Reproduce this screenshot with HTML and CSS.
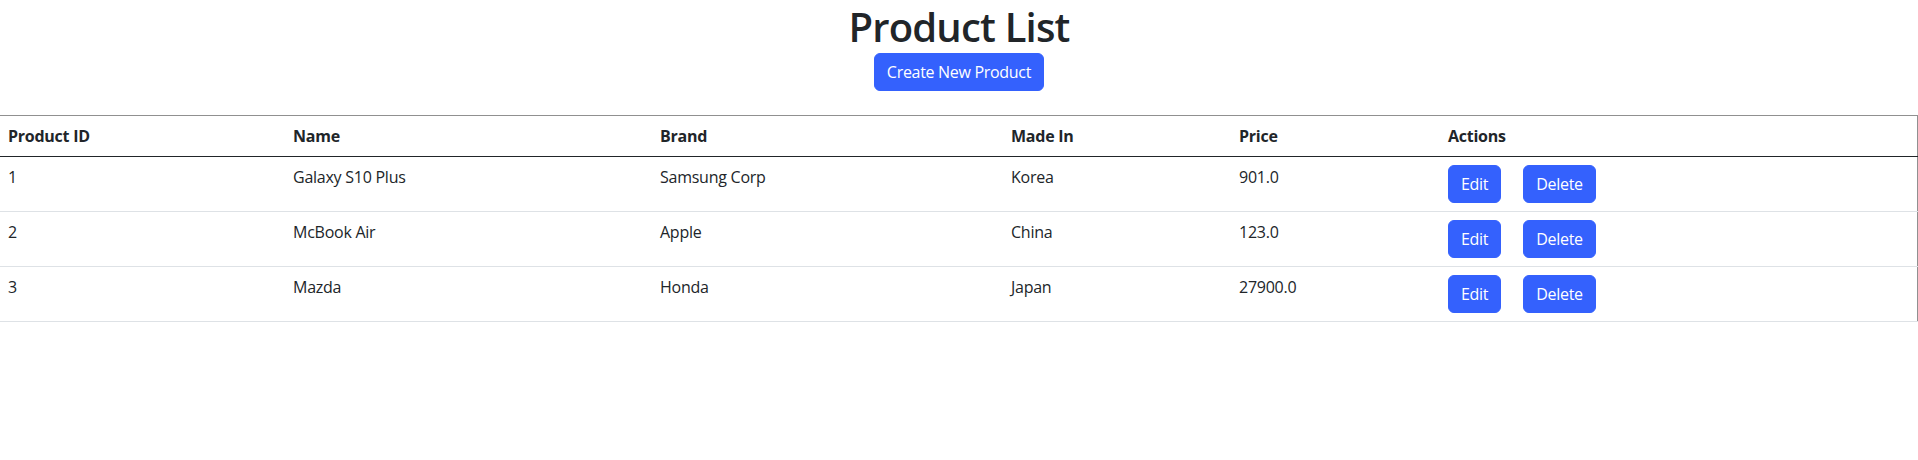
FILE: index.html
```html
<!DOCTYPE html>
<html lang="en">
<head>
<meta charset="utf-8">
<title>Product List</title>
<link rel="stylesheet" href="styles.css">
</head>
<body>
<div class="page-head">
  <h1 class="title">Product List</h1>
  <button class="btn">Create New Product</button>
</div>
<table class="products">
  <thead>
    <tr>
      <th class="c-id">Product ID</th>
      <th class="c-name">Name</th>
      <th class="c-brand">Brand</th>
      <th class="c-made">Made In</th>
      <th class="c-price">Price</th>
      <th class="c-actions">Actions</th>
    </tr>
  </thead>
  <tbody>
    <tr>
      <td>1</td><td>Galaxy S10 Plus</td><td>Samsung Corp</td><td>Korea</td><td>901.0</td>
      <td><div class="actions"><button class="btn">Edit</button><button class="btn">Delete</button></div></td>
    </tr>
    <tr>
      <td>2</td><td>McBook Air</td><td>Apple</td><td>China</td><td>123.0</td>
      <td><div class="actions"><button class="btn">Edit</button><button class="btn">Delete</button></div></td>
    </tr>
    <tr>
      <td>3</td><td>Mazda</td><td>Honda</td><td>Japan</td><td>27900.0</td>
      <td><div class="actions"><button class="btn">Edit</button><button class="btn">Delete</button></div></td>
    </tr>
  </tbody>
</table>
</body>
</html>
```
FILE: styles.css
```css
html, body {
  margin: 0;
  padding: 0;
  background: #fff;
}
body {
  font-family: "Open Sans", "Noto Sans", "Liberation Sans", sans-serif;
  font-size: 16px;
  line-height: 24px;
  letter-spacing: -0.25px;
  color: #212529;
}
.page-head {
  display: flex;
  flex-direction: column;
  align-items: center;
  margin-bottom: 24px;
}
.title {
  margin: 0 0 -1px;
  font-size: 40px;
  line-height: 54px;
  font-weight: 560;
  letter-spacing: -0.8px;
  color: #212529;
}
.btn {
  font-family: inherit;
  font-size: 16px;
  line-height: 24px;
  letter-spacing: -0.3px;
  padding: 6px 12px;
  border: 1px solid #3461fd;
  border-radius: 6px;
  background: #3461fd;
  color: #fff;
  cursor: pointer;
}
.products {
  width: 100%;
  border-collapse: collapse;
  border-top: 1px solid #909090;
  border-right: 1px solid #909090;
}
.products th,
.products td {
  padding: 8px;
  text-align: left;
  vertical-align: top;
}
.products th {
  font-weight: 700;
  border-bottom: 1px solid #212529;
}
.products td {
  border-bottom: 1px solid #dee2e6;
}
.c-id { width: 269px; }
.c-name { width: 351px; }
.c-brand { width: 335px; }
.c-made { width: 212px; }
.c-price { width: 193px; }
.actions {
  display: flex;
  gap: 22px;
}
```
